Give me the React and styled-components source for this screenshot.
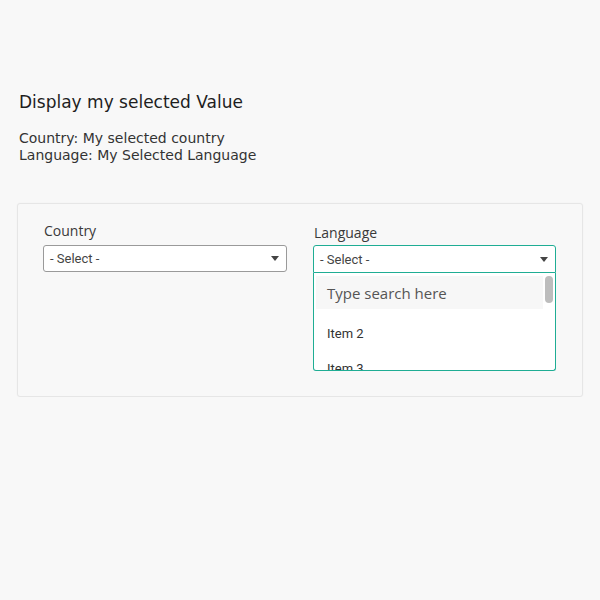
import styled, { createGlobalStyle } from 'styled-components';

const Global = createGlobalStyle`
  html, body {
    margin: 0;
    background: #f8f8f8;
  }
  body {
    font-family: "DejaVu Sans", sans-serif;
    color: #222;
  }
`;

const Page = styled.div`
  padding: 91px 17px 0 17px;
  width: 566px;
`;

const Heading = styled.h3`
  margin: 0 0 16px 2px;
  font-size: 17px;
  font-weight: normal;
  line-height: 23px;
  color: #1e1e1e;
`;

const Values = styled.div`
  margin-left: 2px;
  font-size: 14px;
  line-height: 17px;
  color: #333;
`;

const Card = styled.div`
  margin-top: 39px;
  height: 194px;
  border: 1px solid #e6e6e6;
  border-radius: 3px;
  background: #f8f8f8;
  box-shadow: 0 0 2px rgba(0, 0, 0, 0.04);
  display: grid;
  grid-template-columns: 244px 243px;
  column-gap: 26px;
  padding: 17px 0 0 25px;
  box-sizing: border-box;
  align-items: start;
`;

const Field = styled.div`
  display: flex;
  flex-direction: column;
`;

const Label = styled.label`
  font-family: "Open Sans", sans-serif;
  font-size: 14px;
  line-height: 20px;
  color: #3a3a3a;
  margin: ${({ $lower }) => ($lower ? '2px 0 2px 1px' : '0 0 4px 1px')};
`;

const SelectBox = styled.div`
  position: relative;
  height: ${({ $open }) => ($open ? 28 : 27)}px;
  box-sizing: border-box;
  border: 1px solid ${({ $open }) => ($open ? '#1fad94' : '#9a9a9a')};
  border-radius: ${({ $open }) => ($open ? '3px 3px 0 0' : '3px')};
  background: #fff;
  display: flex;
  align-items: center;
  justify-content: space-between;
  padding: 0 6px 0 6px;
  font-family: Roboto, sans-serif;
  font-size: 13px;
  color: #444;
`;

const Caret = styled.span`
  width: 0;
  height: 0;
  border-left: 4px solid transparent;
  border-right: 4px solid transparent;
  border-top: 5px solid #444;
  margin-right: 1px;
`;

const Dropdown = styled.div`
  position: relative;
  height: 98px;
  box-sizing: border-box;
  border: 1px solid #1fad94;
  border-top: none;
  border-radius: 0 0 3px 3px;
  background: #fff;
  overflow: hidden;
  padding: 3px 12px 0 2px;
`;

const Search = styled.div`
  height: 33px;
  margin-bottom: 7px;
  background: #f7f7f7;
  display: flex;
  align-items: center;
  padding-left: 11px;
  font-family: "Open Sans", sans-serif;
  font-size: 15px;
  color: #555;
`;

const Item = styled.div`
  height: 35px;
  display: flex;
  align-items: center;
  padding-left: 11px;
  font-family: Roboto, sans-serif;
  font-size: 13px;
  color: #333;
`;

const Thumb = styled.div`
  position: absolute;
  top: 3px;
  right: 2px;
  width: 8px;
  height: 27px;
  border-radius: 4px;
  background: #bdbdbd;
`;

export default function App() {
  return (
    <Page>
      <Global />
      <Heading>Display my selected Value</Heading>
      <Values>
        <div>Country: My selected country</div>
        <div>Language: My Selected Language</div>
      </Values>
      <Card>
        <Field>
          <Label>Country</Label>
          <SelectBox>
            <span>- Select -</span>
            <Caret />
          </SelectBox>
        </Field>
        <Field>
          <Label $lower>Language</Label>
          <SelectBox $open>
            <span>- Select -</span>
            <Caret />
          </SelectBox>
          <Dropdown>
            <Search>Type search here</Search>
            <Item>Item 2</Item>
            <Item>Item 3</Item>
            <Thumb />
          </Dropdown>
        </Field>
      </Card>
    </Page>
  );
}
